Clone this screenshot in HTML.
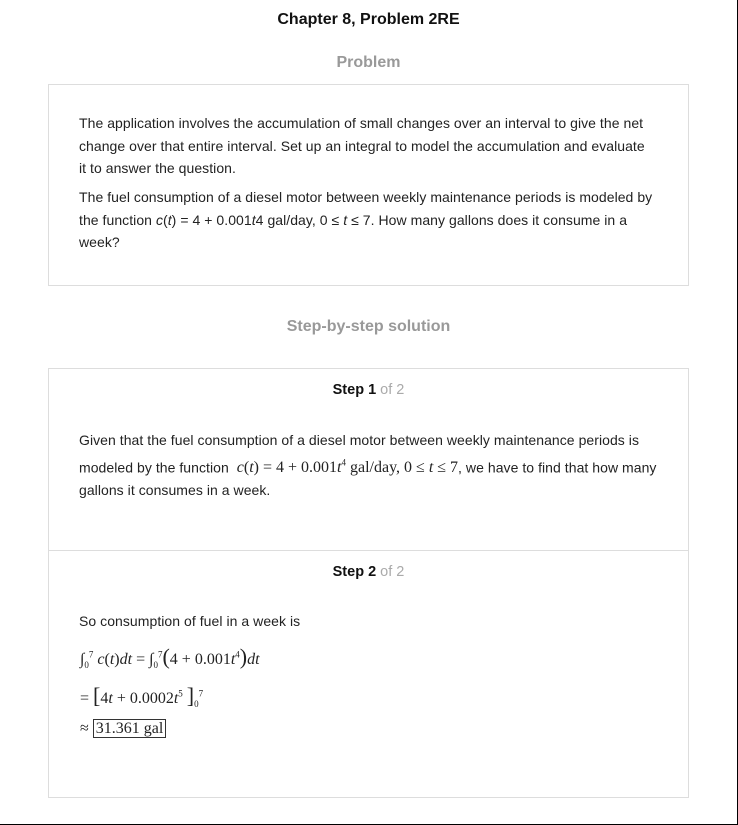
<!DOCTYPE html>
<html><head><meta charset="utf-8"><style>
*{margin:0;padding:0;box-sizing:border-box}
html,body{width:738px;height:825px;background:#fff;overflow:hidden}
body{font-family:"Liberation Sans",Arial,sans-serif;color:#222;position:relative;border-right:1px solid #000;border-bottom:1px solid #000}
.abs{position:absolute}
.c{left:0;width:737px;text-align:center}
.box{position:absolute;left:48px;width:641px;border:1px solid #ddd}
p{position:absolute;left:79px;font-size:14px;line-height:22.5px;width:574px;letter-spacing:0.05px}
.m{font-family:"Liberation Serif",serif;font-size:16px;letter-spacing:0}
</style></head><body>
<div class="abs c" style="top:11px;font-size:16px;font-weight:bold;color:#111">Chapter 8, Problem 2RE</div>
<div class="abs c" style="top:54px;font-size:16px;font-weight:bold;color:#999">Problem</div>
<div class="box" style="top:84px;height:202px"></div>
<p style="top:112px">The application involves the accumulation of small changes over an interval to give the net change over that entire interval. Set up an integral to model the accumulation and evaluate it to answer the question.</p>
<p style="top:186px">The fuel consumption of a diesel motor between weekly maintenance periods is modeled by the function <i>c</i>(<i>t</i>) = 4 + 0.001<i>t</i>4 gal/day, 0 ≤ <i>t</i> ≤ 7. How many gallons does it consume in a week?</p>
<div class="abs c" style="top:318px;font-size:16px;font-weight:bold;color:#999">Step-by-step solution</div>
<div class="box" style="top:368px;height:430px"></div>
<div class="abs" style="left:49px;width:639px;top:550px;border-top:1px solid #ddd"></div>
<div class="abs c" style="top:382px;font-size:14.5px;font-weight:bold;color:#111">Step 1 <span style="font-weight:normal;color:#aaa">of 2</span></div>
<p style="top:429px;width:590px">Given that the fuel consumption of a diesel motor between weekly maintenance periods is modeled by the function <span class="m">&nbsp;<i>c</i>(<i>t</i>) = 4 + 0.001<i>t</i><sup style="font-size:9px">4</sup> gal/day, 0 ≤ <i>t</i> ≤ 7</span>, we have to find that how many gallons it consumes in a week.</p>
<div class="abs c" style="top:564px;font-size:14.5px;font-weight:bold;color:#111">Step 2 <span style="font-weight:normal;color:#aaa">of 2</span></div>
<p style="top:610px">So consumption of fuel in a week is</p>
<div class="abs m" style="left:80px;top:644px;white-space:nowrap">∫<sub style="font-size:9px">0</sub><sup style="font-size:9px">7</sup> <i>c</i>(<i>t</i>)<i>dt</i> = ∫<sub style="font-size:9px">0</sub><sup style="font-size:9px">7</sup><span style="font-size:22px">(</span>4 + 0.001<i>t</i><sup style="font-size:9px">4</sup><span style="font-size:22px">)</span><i>dt</i></div>
<div class="abs m" style="left:80px;top:683px;white-space:nowrap">= <span style="font-size:22px">[</span>4<i>t</i> + 0.0002<i>t</i><sup style="font-size:9px">5</sup> <span style="font-size:22px">]</span><sub style="font-size:9px">0</sub><sup style="font-size:9px">7</sup></div>
<div class="abs m" style="left:80px;top:720px;white-space:nowrap">≈ <span style="border:1px solid #333;padding:0 2px">31.361 gal</span></div>
</body></html>
